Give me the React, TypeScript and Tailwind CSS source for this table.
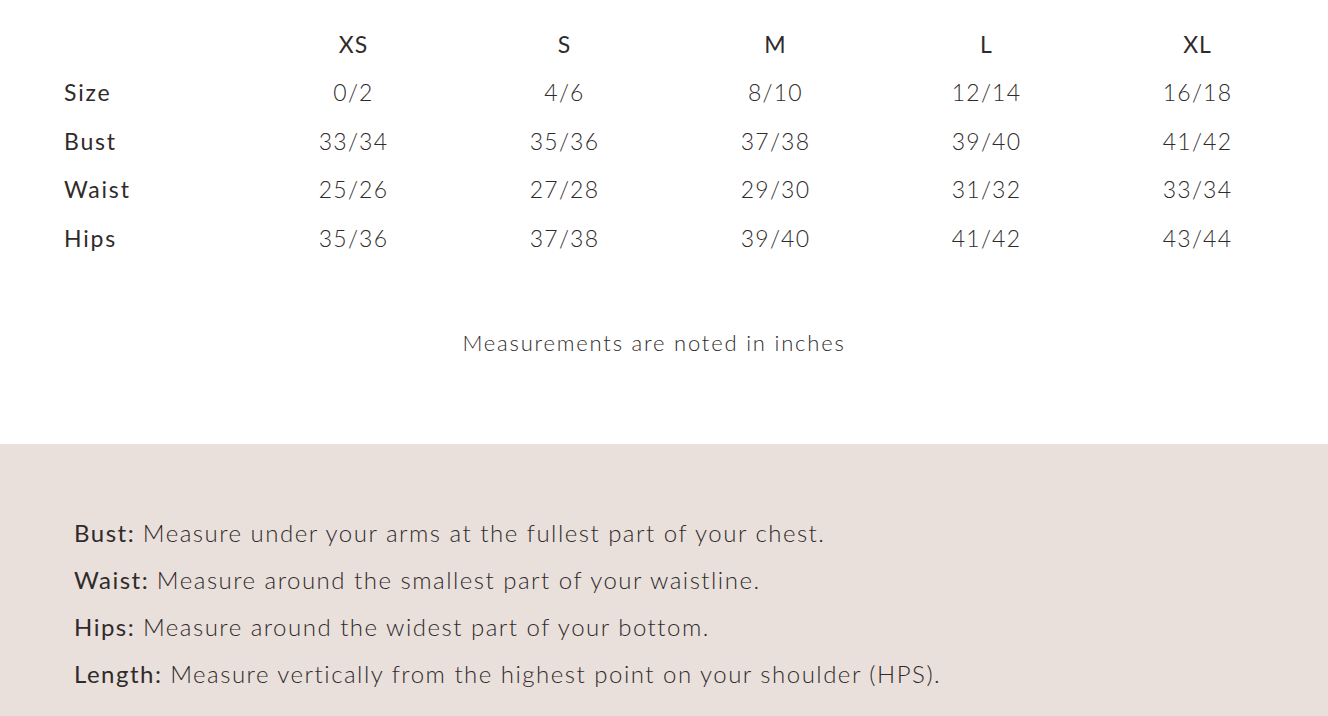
import React from 'react';

const sizes = ['XS', 'S', 'M', 'L', 'XL'];

const rows = [
  { label: 'Size', values: ['0/2', '4/6', '8/10', '12/14', '16/18'] },
  { label: 'Bust', values: ['33/34', '35/36', '37/38', '39/40', '41/42'] },
  { label: 'Waist', values: ['25/26', '27/28', '29/30', '31/32', '33/34'] },
  { label: 'Hips', values: ['35/36', '37/38', '39/40', '41/42', '43/44'] },
];

const guide = [
  { term: 'Bust:', text: 'Measure under your arms at the fullest part of your chest.' },
  { term: 'Waist:', text: 'Measure around the smallest part of your waistline.' },
  { term: 'Hips:', text: 'Measure around the widest part of your bottom.' },
  { term: 'Length:', text: 'Measure vertically from the highest point on your shoulder (HPS).' },
];

export default function App() {
  return (
    <div className="w-[1328px] h-[716px] bg-white text-[#2f2b2b] overflow-hidden" style={{ fontFamily: 'Lato, "Open Sans", sans-serif' }}>
      {/* Size table */}
      <div className="pl-[64px] pt-[20px]">
        <div className="grid grid-cols-[184px_repeat(5,211px)]">
          <div className="h-[48px]" />
          {sizes.map((s) => (
            <div key={s} className="h-[48px] flex items-center justify-center text-[23px] tracking-[1px]">
              {s}
            </div>
          ))}
          {rows.map((row) => (
            <React.Fragment key={row.label}>
              <div className="h-[48.5px] flex items-center text-[23px] font-normal tracking-[1.8px]">{row.label}</div>
              {row.values.map((v, i) => (
                <div key={i} className="h-[48.5px] flex items-center justify-center text-[23px] font-light tracking-[1.2px]">
                  {v}
                </div>
              ))}
            </React.Fragment>
          ))}
        </div>
      </div>

      <p className="mt-[65px] h-[32px] leading-[32px] text-center text-[22px] font-light tracking-[1.8px] pr-[20px]">
        Measurements are noted in inches
      </p>

      {/* Measuring guide */}
      <div className="mt-[85px] bg-[#e9dfdb] pt-[73px] pl-[74px] flex flex-col gap-[15px] h-[300px]">
        {guide.map((g) => (
          <p key={g.term} className="h-[32px] text-[24px] leading-[32px] tracking-[1.5px] whitespace-nowrap">
            <span className="font-normal">{g.term}</span>{' '}
            <span className="font-light">{g.text}</span>
          </p>
        ))}
      </div>
    </div>
  );
}
